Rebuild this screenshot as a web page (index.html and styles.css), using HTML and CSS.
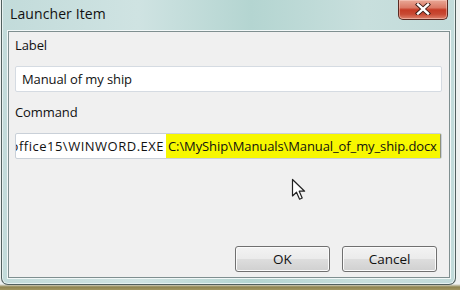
FILE: index.html
```html
<!DOCTYPE html>
<html>
<head>
<meta charset="utf-8">
<link rel="stylesheet" href="styles.css">
</head>
<body>
<div class="desktop">
  <div class="window">
    <div class="titlebar">
      <span class="title">Launcher Item</span>
      <button class="close" aria-label="Close">
        <svg width="18" height="12" viewBox="0 0 18 12"><path d="M4 1.5 L14 10.5 M14 1.5 L4 10.5" stroke="#3a1a14" stroke-width="4.2" stroke-linecap="square"/><path d="M4 1.5 L14 10.5 M14 1.5 L4 10.5" stroke="#ffffff" stroke-width="2.4" stroke-linecap="square"/></svg>
      </button>
    </div>
    <div class="client">
      <div class="field">
        <div class="label">Label</div>
        <div class="input"><span class="val">Manual of my ship</span></div>
      </div>
      <div class="field">
        <div class="label">Command</div>
        <div class="input cmd">
          <span class="cmd-head"><span>C:\Program Files\Microsoft Office\root\office15\WINWORD.EXE</span></span>
          <span class="cmd-sel">C:\MyShip\Manuals\Manual_of_my_ship.docx</span>
        </div>
      </div>
      <div class="spacer"></div>
      <div class="buttons">
        <button class="btn">OK</button>
        <button class="btn">Cancel</button>
      </div>
      <svg class="pointer" width="16" height="24" viewBox="0 0 16 24"><path d="M1.5 1.5 L1.5 18 L5.5 14.2 L8.6 21.2 L11.2 20 L8.2 13.2 L13.6 13.2 Z" fill="#ffffff" stroke="#222" stroke-width="1.2" stroke-linejoin="round"/></svg>
    </div>
  </div>
</div>
</body>
</html>
```
FILE: styles.css
```css
html, body { margin: 0; padding: 0; }
body {
  width: 460px;
  height: 290px;
  overflow: hidden;
  background: #eef1f0;
  font-family: "Open Sans", "DejaVu Sans", sans-serif;
}
.desktop {
  width: 460px;
  height: 290px;
  background: linear-gradient(to bottom, #eef1f0 0, #eef1f0 284px, #8f8450 287px, #a29661 290px);
}
.window {
  width: 455px;
  height: 285px;
  margin-left: 1px;
  border: 1px solid #51605f;
  border-top: none;
  border-radius: 0 0 7px 7px;
  background: linear-gradient(to right, #c2dbda 0%, #cfe3e2 30%, #b4d5d1 55%, #c8dfdd 80%, #c2dbda 100%);
  box-shadow: inset 1px 0 0 #e6f1f0, inset -1px 0 0 #e6f1f0, inset 0 -1px 0 #e6f1f0;
  display: flex;
  flex-direction: column;
  padding: 0 5px 6px 6px;
  box-sizing: border-box;
  position: relative;
}
.titlebar {
  height: 31px;
  display: flex;
  align-items: flex-start;
  justify-content: space-between;
  flex: none;
}
.title {
  font-size: 14px;
  color: #111;
  margin: 4px 0 0 2px;
  letter-spacing: 0.1px;
}
.close {
  width: 50px;
  height: 20px;
  margin-right: 2px;
  padding: 0;
  border: 1px solid #5a2a22;
  border-top: none;
  border-radius: 0 0 5px 5px;
  background: linear-gradient(to bottom, #e9a896 0%, #db7a66 40%, #c53b25 52%, #c84a34 75%, #de826c 100%);
  box-shadow: inset 0 0 0 1px rgba(255,220,210,0.45);
  display: flex;
  align-items: center;
  justify-content: center;
}
.close svg { display: block; margin-top: -1px; }
.client {
  flex: 1;
  background: #f0f0f0;
  border: 1px solid #7f8f90;
  box-shadow: 0 0 0 1px #f2f8f8;
  display: flex;
  flex-direction: column;
  padding: 0 7px 5px 6px;
  position: relative;
  color: #111;
  letter-spacing: -0.1px;
}
.field { display: flex; flex-direction: column; }
.label {
  font-size: 13px;
  height: 20px;
  line-height: 20px;
  margin-top: 3px;
  margin-bottom: 11px;
}
.field + .field .label { margin-top: 10px; }
.input {
  height: 26px;
  box-sizing: border-box;
  background: #fff;
  border: 1px solid #d5dbe2;
  border-radius: 2px;
  display: flex;
  align-items: center;
  font-size: 13px;
  white-space: nowrap;
  overflow: hidden;
}
.val { padding-left: 6px; }
.cmd { border-color: #c9d0d8; }
.cmd-head {
  width: 150px;
  flex: none;
  display: flex;
  justify-content: flex-end;
  overflow: hidden;
  padding-right: 2px;
  box-sizing: border-box;
}
.cmd-head span { flex: none; letter-spacing: 0.5px; }
.cmd-sel {
  flex: 1;
  align-self: stretch;
  background: #f7f700;
  display: flex;
  align-items: center;
  padding-left: 2px;
  border-right: 1px solid #8d8f7a;
}
.spacer { flex: 1; }
.buttons {
  display: flex;
  justify-content: flex-end;
  gap: 12px;
  padding-right: 5px;
}
.btn {
  width: 95px;
  height: 26px;
  border: 1px solid #707070;
  border-radius: 3px;
  background: linear-gradient(to bottom, #f3f3f3 0%, #ebebeb 48%, #dddddd 52%, #d0d0d0 100%);
  box-shadow: inset 0 0 0 1px #fbfbfb;
  font-family: "Open Sans", "DejaVu Sans", sans-serif;
  font-size: 13.5px;
  color: #111;
  padding: 0;
}
.pointer {
  position: absolute;
  left: 282px;
  top: 146px;
}
```
